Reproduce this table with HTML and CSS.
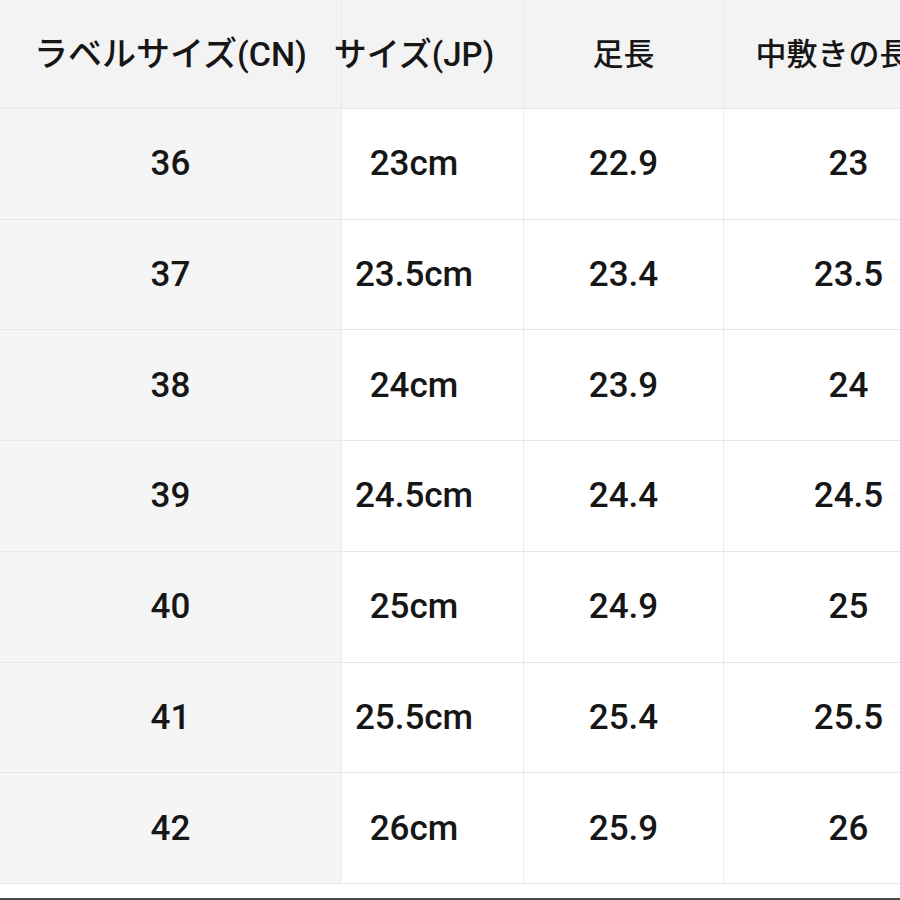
FILE: index.html
```html
<!DOCTYPE html>
<html lang="ja">
<head>
<meta charset="utf-8">
<link rel="stylesheet" href="styles.css">
</head>
<body>
<div class="page">
  <div class="table">
    <div class="cell head c1">ラベルサイズ(CN)</div>
    <div class="cell head c2">サイズ(JP)</div>
    <div class="cell head c3 kanji">足長</div>
    <div class="cell head c4 kanji">中敷きの長さ</div>

    <div class="cell c1">36</div><div class="cell c2">23cm</div><div class="cell c3">22.9</div><div class="cell c4">23</div>
    <div class="cell c1">37</div><div class="cell c2">23.5cm</div><div class="cell c3">23.4</div><div class="cell c4">23.5</div>
    <div class="cell c1">38</div><div class="cell c2">24cm</div><div class="cell c3">23.9</div><div class="cell c4">24</div>
    <div class="cell c1">39</div><div class="cell c2">24.5cm</div><div class="cell c3">24.4</div><div class="cell c4">24.5</div>
    <div class="cell c1">40</div><div class="cell c2">25cm</div><div class="cell c3">24.9</div><div class="cell c4">25</div>
    <div class="cell c1">41</div><div class="cell c2">25.5cm</div><div class="cell c3">25.4</div><div class="cell c4">25.5</div>
    <div class="cell c1">42</div><div class="cell c2">26cm</div><div class="cell c3">25.9</div><div class="cell c4">26</div>
  </div>
  <div class="foot"></div>
</div>
</body>
</html>
```
FILE: styles.css
```css
html, body {
  margin: 0;
  padding: 0;
  background: #ffffff;
  overflow: hidden;
}

.page {
  width: 900px;
  height: 900px;
  overflow: hidden;
  display: flex;
  flex-direction: column;
}

.table {
  width: 974px;
  display: grid;
  grid-template-columns: 342px 182px 200px 250px;
  grid-template-rows: 109px repeat(7, 110.714px);
  font-family: Roboto, "Liberation Sans", "Noto Sans CJK JP", sans-serif;
  font-weight: 500;
  font-size: 35px;
  color: #161616;
}

.cell {
  box-sizing: border-box;
  display: flex;
  align-items: center;
  justify-content: center;
  border-right: 1px solid #ebebeb;
  border-bottom: 1px solid #e8e8e8;
  white-space: nowrap;
  background: #ffffff;
}

.head {
  background: #f3f3f3;
  font-size: 33px;
  padding-bottom: 5px;
}

.head.kanji {
  font-size: 31px;
}

.c1 {
  background: #f5f5f5;
}

.head.c1 {
  background: #f3f3f3;
  font-size: 34px;
}

.c2 {
  padding-right: 37px;
}

.foot {
  flex: 1;
  border-bottom: 2px solid #4a4a4a;
  box-sizing: border-box;
}
```
